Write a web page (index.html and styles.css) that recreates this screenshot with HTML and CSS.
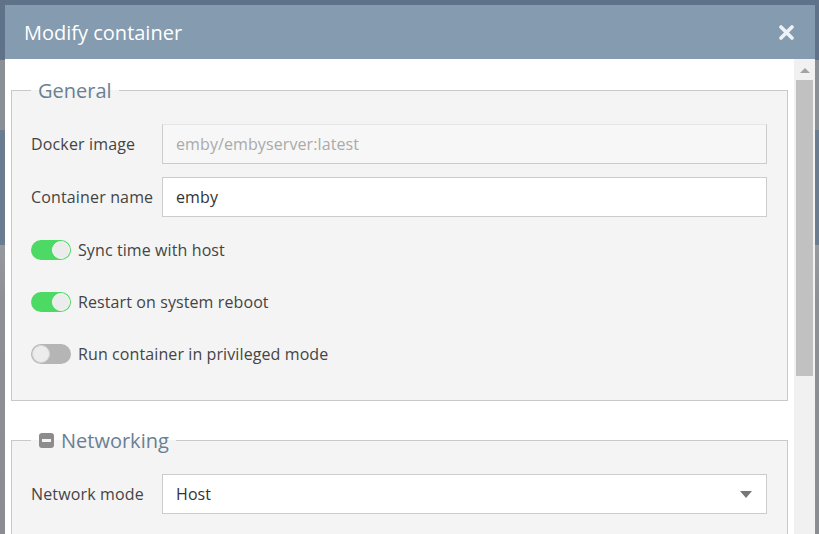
FILE: index.html
```html
<!DOCTYPE html>
<html>
<head>
<meta charset="utf-8">
<link rel="stylesheet" href="styles.css">
</head>
<body>
<div class="page">
  <div class="dialog">
    <div class="dialog-header">
      <span class="dialog-title">Modify container</span>
      <svg class="close-icon" width="15" height="15" viewBox="0 0 15 15"><path d="M2 2 L13 13 M13 2 L2 13" stroke="#eef2f6" stroke-width="3.6" stroke-linecap="round"/></svg>
    </div>
    <div class="dialog-body">
      <div class="content">
        <fieldset class="group">
          <legend class="group-title">General</legend>
          <div class="row">
            <label class="row-label">Docker image</label>
            <div class="input input-disabled">emby/embyserver:latest</div>
          </div>
          <div class="row">
            <label class="row-label">Container name</label>
            <div class="input">emby</div>
          </div>
          <div class="row toggle-row">
            <span class="toggle on"><span class="knob"></span></span>
            <span class="toggle-label">Sync time with host</span>
          </div>
          <div class="row toggle-row">
            <span class="toggle on"><span class="knob"></span></span>
            <span class="toggle-label">Restart on system reboot</span>
          </div>
          <div class="row toggle-row">
            <span class="toggle off"><span class="knob"></span></span>
            <span class="toggle-label">Run container in privileged mode</span>
          </div>
        </fieldset>
        <fieldset class="group group-net">
          <legend class="group-title"><span class="minus-icon"></span>Networking</legend>
          <div class="row">
            <label class="row-label">Network mode</label>
            <div class="input select">Host<span class="caret"></span></div>
          </div>
        </fieldset>
      </div>
      <div class="scrollbar">
        <div class="scroll-arrow"></div>
        <div class="scroll-thumb"></div>
      </div>
    </div>
  </div>
</div>
</body>
</html>
```
FILE: styles.css
```css
html, body {
  margin: 0;
  padding: 0;
  height: 100%;
  overflow: hidden;
}
body {
  font-family: "Open Sans", "DejaVu Sans", sans-serif;
  background: linear-gradient(to bottom, #5f7289 0px, #5f7289 60px, #8b9096 60px, #8b9096 130px, #6a7c90 130px, #6a7c90 245px, #969a9f 245px, #8d9196 300px, #8a8e93 534px);
}
.page {
  padding: 5px 4px 0 5px;
  height: 534px;
  box-sizing: border-box;
}
.dialog {
  width: 810px;
  height: 529px;
  display: flex;
  flex-direction: column;
  background: #fff;
}
.dialog-header {
  height: 54px;
  flex: none;
  background: #849bb0;
  display: flex;
  align-items: center;
  justify-content: space-between;
  padding: 0 21px 0 19px;
}
.dialog-title {
  color: #ffffff;
  font-size: 20px;
}
.close-icon {
  display: block;
}
.dialog-body {
  flex: 1;
  display: flex;
  overflow: hidden;
}
.content {
  width: 789px;
  flex: none;
  padding: 0 6px;
  box-sizing: border-box;
  overflow: hidden;
}
.group {
  margin: 18px 0 0 0;
  border: 1px solid #c9c9c9;
  background: #f4f4f4;
  padding: 20px 20px 27px 19px;
  min-inline-size: 0;
}
.group-net {
  margin-top: 26px;
  padding-bottom: 60px;
}
.group-title {
  padding: 0 7px;
  font-size: 20px;
  line-height: 27px;
  color: #6a7f93;
  display: flex;
  align-items: center;
}
.minus-icon {
  width: 15px;
  height: 15px;
  border-radius: 3px;
  background: #8c8c8c;
  margin: 0 7px 0 1px;
  position: relative;
}
.minus-icon::after {
  content: "";
  position: absolute;
  left: 3px;
  right: 3px;
  top: 6px;
  height: 3px;
  background: #f4f4f4;
}
.row {
  display: flex;
  align-items: center;
  height: 40px;
  margin-bottom: 13px;
}
.row:last-child {
  margin-bottom: 0;
}
.toggle-row {
  height: 39px;
}
.row-label {
  width: 131px;
  flex: none;
  font-size: 16px;
  letter-spacing: 0.15px;
  color: #444;
}
.input {
  flex: 1;
  height: 40px;
  box-sizing: border-box;
  border: 1px solid #cccccc;
  background: #fff;
  padding: 0 13px;
  display: flex;
  align-items: center;
  font-size: 16px;
  letter-spacing: 0.1px;
  color: #333;
}
.input-disabled {
  background: #f7f7f7;
  color: #aaaaaa;
  border-top-color: #e6e6e6;
}
.select {
  justify-content: space-between;
}
.caret {
  width: 0;
  height: 0;
  border-left: 6px solid transparent;
  border-right: 6px solid transparent;
  border-top: 7px solid #777;
  margin-right: 1px;
}
.toggle {
  width: 40px;
  height: 20px;
  border-radius: 10px;
  box-sizing: border-box;
  position: relative;
  flex: none;
  margin-right: 7px;
}
.toggle.on {
  background: #4cd964;
}
.toggle.off {
  background: #b5b5b5;
}
.knob {
  position: absolute;
  top: 1px;
  width: 18px;
  height: 18px;
  border-radius: 50%;
  background: #ececec;
  box-sizing: border-box;
  border: 1px solid #f8f8f8;
}
.toggle.on .knob {
  right: 1px;
}
.toggle.off .knob {
  left: 1px;
  border-color: #d6d6d6;
}
.toggle-label {
  font-size: 16px;
  letter-spacing: 0.1px;
  color: #444;
}
.scrollbar {
  width: 21px;
  flex: none;
  background: #f1f1f1;
  display: flex;
  flex-direction: column;
  align-items: center;
}
.scroll-arrow {
  margin-top: 9px;
  width: 0;
  height: 0;
  border-left: 5px solid transparent;
  border-right: 5px solid transparent;
  border-bottom: 5px solid #a3a3a3;
}
.scroll-thumb {
  margin-top: 7px;
  width: 17px;
  height: 296px;
  background: #c1c1c1;
}
```
